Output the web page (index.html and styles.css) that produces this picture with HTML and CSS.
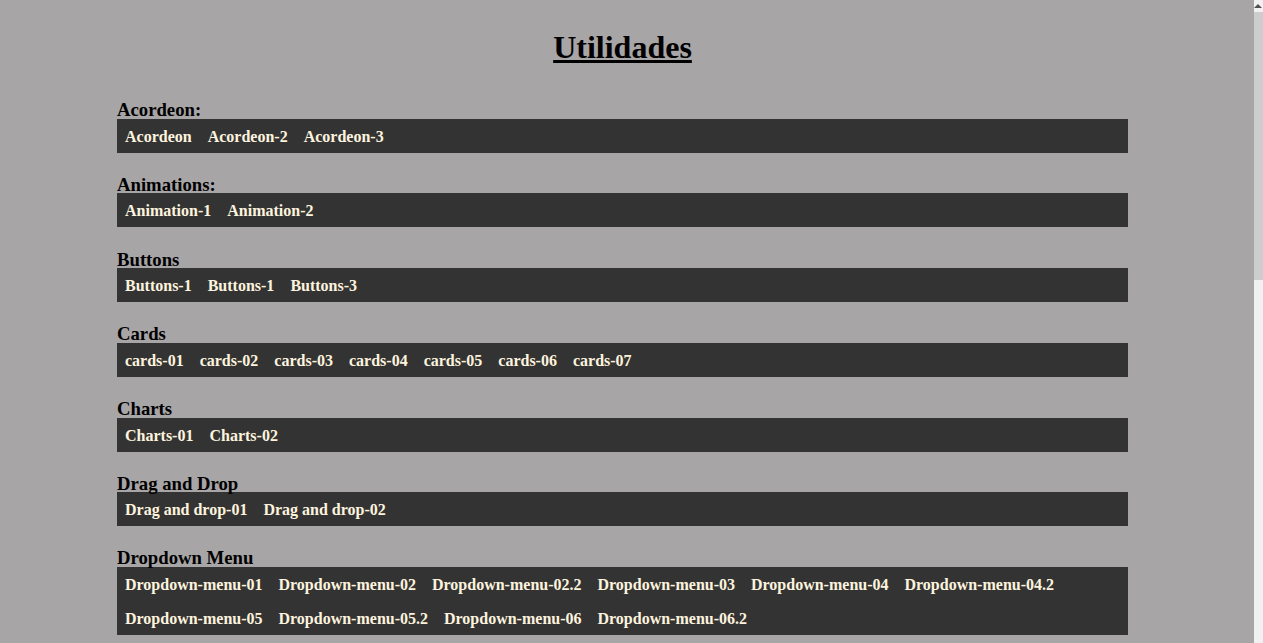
FILE: index.html
```html
<!DOCTYPE html>
<html lang="pt">
<head>
<meta charset="utf-8">
<title>Utilidades</title>
<link rel="stylesheet" href="styles.css">
</head>
<body>
<main class="page">
  <h1 class="title">Utilidades</h1>

  <section class="group">
    <h3 class="group-title">Acordeon:</h3>
    <ul class="links">
      <li><a href="#">Acordeon</a></li>
      <li><a href="#">Acordeon-2</a></li>
      <li><a href="#">Acordeon-3</a></li>
    </ul>
  </section>

  <section class="group">
    <h3 class="group-title">Animations:</h3>
    <ul class="links">
      <li><a href="#">Animation-1</a></li>
      <li><a href="#">Animation-2</a></li>
    </ul>
  </section>

  <section class="group">
    <h3 class="group-title">Buttons</h3>
    <ul class="links">
      <li><a href="#">Buttons-1</a></li>
      <li><a href="#">Buttons-1</a></li>
      <li><a href="#">Buttons-3</a></li>
    </ul>
  </section>

  <section class="group">
    <h3 class="group-title">Cards</h3>
    <ul class="links">
      <li><a href="#">cards-01</a></li>
      <li><a href="#">cards-02</a></li>
      <li><a href="#">cards-03</a></li>
      <li><a href="#">cards-04</a></li>
      <li><a href="#">cards-05</a></li>
      <li><a href="#">cards-06</a></li>
      <li><a href="#">cards-07</a></li>
    </ul>
  </section>

  <section class="group">
    <h3 class="group-title">Charts</h3>
    <ul class="links">
      <li><a href="#">Charts-01</a></li>
      <li><a href="#">Charts-02</a></li>
    </ul>
  </section>

  <section class="group">
    <h3 class="group-title">Drag and Drop</h3>
    <ul class="links">
      <li><a href="#">Drag and drop-01</a></li>
      <li><a href="#">Drag and drop-02</a></li>
    </ul>
  </section>

  <section class="group">
    <h3 class="group-title">Dropdown Menu</h3>
    <ul class="links">
      <li><a href="#">Dropdown-menu-01</a></li>
      <li><a href="#">Dropdown-menu-02</a></li>
      <li><a href="#">Dropdown-menu-02.2</a></li>
      <li><a href="#">Dropdown-menu-03</a></li>
      <li><a href="#">Dropdown-menu-04</a></li>
      <li><a href="#">Dropdown-menu-04.2</a></li>
      <li><a href="#">Dropdown-menu-05</a></li>
      <li><a href="#">Dropdown-menu-05.2</a></li>
      <li><a href="#">Dropdown-menu-06</a></li>
      <li><a href="#">Dropdown-menu-06.2</a></li>
    </ul>
  </section>
</main>

<div class="scrollbar" aria-hidden="true">
  <div class="scrollbar-up"><span class="scrollbar-arrow"></span></div>
  <div class="scrollbar-thumb"></div>
</div>
</body>
</html>
```

FILE: styles.css
```css
html {
  background: #a7a5a6;
}

body {
  margin: 0;
  min-height: 1485px;
  font-family: "Liberation Serif", "Times New Roman", serif;
  color: #000;
}

.page {
  width: 1011px;
  margin-left: 117px;
  padding-bottom: 20px;
}

.title {
  margin: 29px 0 35.5px;
  font-size: 32px;
  line-height: 36.8px;
  font-weight: bold;
  text-align: center;
  text-decoration: underline;
}

.group {
  margin-top: 18.72px;
}

.group-title {
  margin: 23.2px 0 0;
  font-size: 18.72px;
  line-height: 17.5px;
  font-weight: bold;
}

.links {
  display: flex;
  flex-wrap: wrap;
  margin: 0;
  padding: 0;
  list-style: none;
  background: #333333;
}

.links a {
  display: block;
  padding: 9px 8px 7px;
  font-size: 16px;
  font-weight: bold;
  color: #fdf3df;
  text-decoration: none;
}

/* imitation of the window scrollbar, drawn over the page edge */
.scrollbar {
  position: fixed;
  top: 0;
  right: 0;
  bottom: 0;
  width: 9px;
  background: #f1f1f1;
  display: flex;
  flex-direction: column;
}

.scrollbar-up {
  height: 12px;
  display: flex;
  align-items: center;
  justify-content: flex-end;
  padding-right: 1px;
}

.scrollbar-arrow {
  width: 0;
  height: 0;
  border-left: 4px solid transparent;
  border-right: 4px solid transparent;
  border-bottom: 4px solid #505050;
}

.scrollbar-thumb {
  height: 268px;
  background: #cdcdcd;
}
```
